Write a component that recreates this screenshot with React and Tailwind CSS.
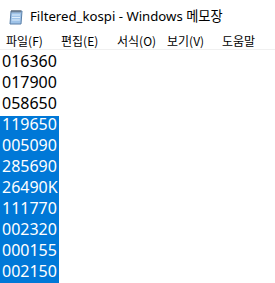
const lines = [
  { v: '016360', sel: false },
  { v: '017900', sel: false },
  { v: '058650', sel: false },
  { v: '119650', sel: true },
  { v: '005090', sel: true },
  { v: '285690', sel: true },
  { v: '26490K', sel: true },
  { v: '111770', sel: true },
  { v: '002320', sel: true },
  { v: '000155', sel: true },
  { v: '002150', sel: true },
]

const menus = ['파일(F)', '편집(E)', '서식(O)', '보기(V)', '도움말']

function NotepadIcon() {
  return (
    <svg width="14" height="16" viewBox="0 0 14 16">
      <path d="M2 2 L13 2 L12 15 L1 15 Z" fill="#9fc3e8" stroke="#5a7fa8" strokeWidth="1" />
      <path d="M3 6 H11 M3 8.5 H11 M2.8 11 H10.8" stroke="#dfeefb" strokeWidth="1" />
      <path d="M3 1 V3.5 M5 1 V3.5 M7 1 V3.5 M9 1 V3.5 M11 1 V3.5" stroke="#555" strokeWidth="0.9" />
    </svg>
  )
}

export default function App() {
  return (
    <div className="w-[275px] h-[283px] overflow-hidden bg-white flex flex-col" style={{ fontFamily: '"Noto Sans", "Noto Sans CJK KR", sans-serif' }}>
      <div className="h-[32px] flex items-center pl-[9px] pt-[2px] gap-[7px] shrink-0">
        <NotepadIcon />
        <span className="text-[13.2px] text-black">Filtered_kospi - Windows 메모장</span>
      </div>
      <div className="h-[18px] flex items-center text-[12px] text-black shrink-0 border-b border-[#f0f0f0]" style={{ fontFamily: '"Noto Sans CJK KR", sans-serif' }}>
        <span className="ml-[6px] w-[55px]">{menus[0]}</span>
        <span className="w-[56px]">{menus[1]}</span>
        <span className="w-[50px]">{menus[2]}</span>
        <span className="w-[55px]">{menus[3]}</span>
        <span>{menus[4]}</span>
      </div>
      <div className="pt-[3px] flex flex-col items-start">
        {lines.map((l) => (
          <div
            key={l.v}
            className={`h-[21px] shrink-0 leading-[16px] text-[16px] pl-[2px] pr-[1px] w-[59px] ${l.sel ? 'bg-[#0078d7] text-white' : 'text-black'}`}
          >
            {l.v}
          </div>
        ))}
      </div>
    </div>
  )
}
